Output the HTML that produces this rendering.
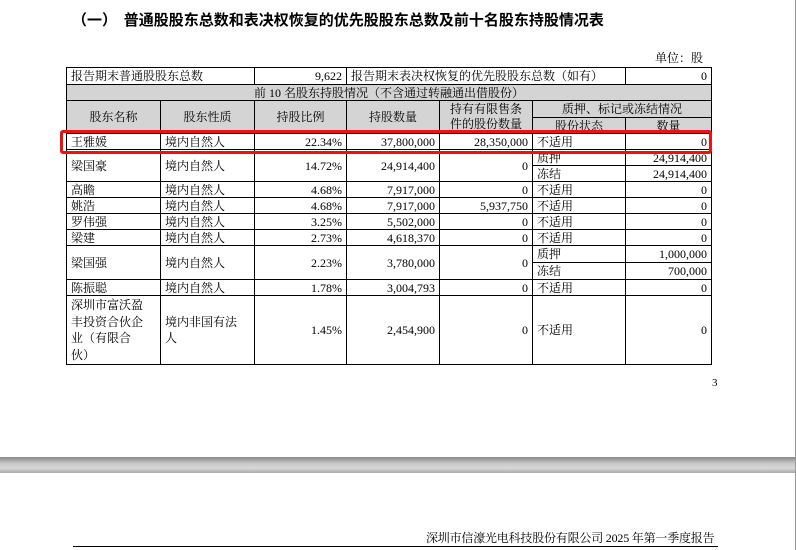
<!DOCTYPE html>
<html><head><meta charset="utf-8"><style>
html,body{margin:0;padding:0;width:796px;height:550px;overflow:hidden;background:#fff;position:relative;font-family:"Liberation Serif","Noto Serif CJK SC",serif;color:#000}
.t{position:absolute;white-space:nowrap}
table{position:absolute;left:66px;top:67px;border-collapse:collapse;table-layout:fixed;font-size:12px}
td{border:1px solid #000;padding:0 4px;line-height:14px;height:15px;overflow:hidden;white-space:nowrap}
.g{background:#d4d4d4}
.c{text-align:center}
.r{text-align:right}
</style></head><body>
<div class="t" style="left:72px;top:9px;font-size:15px;font-weight:bold;font-family:'Noto Sans CJK SC',sans-serif">（一）&nbsp;&nbsp;普通股股东总数和表决权恢复的优先股股东总数及前十名股东持股情况表</div>
<div class="t" style="left:655px;top:49px;font-size:12px">单位：股</div>
<table>
<colgroup><col style="width:94px"><col style="width:94px"><col style="width:92px"><col style="width:93px"><col style="width:93px"><col style="width:93px"><col style="width:86px"></colgroup>
<tr style="height:17px"><td colspan="2">报告期末普通股股东总数</td><td class="r">9,622</td><td colspan="3">报告期末表决权恢复的优先股股东总数（如有）</td><td class="r">0</td></tr>
<tr style="height:16px" class="g"><td colspan="7" class="c">前 10 名股东持股情况（不含通过转融通出借股份）</td></tr>
<tr class="g" style="height:17px"><td rowspan="2" class="c">股东名称</td><td rowspan="2" class="c">股东性质</td><td rowspan="2" class="c">持股比例</td><td rowspan="2" class="c">持股数量</td><td rowspan="2" class="c" style="line-height:15px">持有有限售条<br>件的股份数量</td><td colspan="2" class="c">质押、标记或冻结情况</td></tr>
<tr class="g" style="height:16px"><td class="c">股份状态</td><td class="c">数量</td></tr>
<tr style="height:16px"><td>王雅媛</td><td>境内自然人</td><td class="r">22.34%</td><td class="r">37,800,000</td><td class="r">28,350,000</td><td>不适用</td><td class="r">0</td></tr>
<tr style="height:16px"><td rowspan="2">梁国豪</td><td rowspan="2">境内自然人</td><td rowspan="2" class="r">14.72%</td><td rowspan="2" class="r">24,914,400</td><td rowspan="2" class="r">0</td><td>质押</td><td class="r">24,914,400</td></tr>
<tr style="height:16px"><td>冻结</td><td class="r">24,914,400</td></tr>
<tr style="height:16px"><td>高瞻</td><td>境内自然人</td><td class="r">4.68%</td><td class="r">7,917,000</td><td class="r">0</td><td>不适用</td><td class="r">0</td></tr>
<tr style="height:16px"><td>姚浩</td><td>境内自然人</td><td class="r">4.68%</td><td class="r">7,917,000</td><td class="r">5,937,750</td><td>不适用</td><td class="r">0</td></tr>
<tr style="height:16px"><td>罗伟强</td><td>境内自然人</td><td class="r">3.25%</td><td class="r">5,502,000</td><td class="r">0</td><td>不适用</td><td class="r">0</td></tr>
<tr style="height:16px"><td>梁建</td><td>境内自然人</td><td class="r">2.73%</td><td class="r">4,618,370</td><td class="r">0</td><td>不适用</td><td class="r">0</td></tr>
<tr style="height:17px"><td rowspan="2">梁国强</td><td rowspan="2">境内自然人</td><td rowspan="2" class="r">2.23%</td><td rowspan="2" class="r">3,780,000</td><td rowspan="2" class="r">0</td><td>质押</td><td class="r">1,000,000</td></tr>
<tr style="height:17px"><td>冻结</td><td class="r">700,000</td></tr>
<tr style="height:16px"><td>陈振聪</td><td>境内自然人</td><td class="r">1.78%</td><td class="r">3,004,793</td><td class="r">0</td><td>不适用</td><td class="r">0</td></tr>
<tr style="height:69px"><td style="line-height:16.5px">深圳市富沃盈<br>丰投资合伙企<br>业（有限合<br>伙）</td><td style="line-height:16px">境内非国有法<br>人</td><td class="r">1.45%</td><td class="r">2,454,900</td><td class="r">0</td><td>不适用</td><td class="r">0</td></tr>
</table>
<div style="position:absolute;left:60px;top:130px;width:646px;height:18px;border:3px solid #f01010;border-radius:3px"></div>
<div class="t" style="left:712px;top:377px;font-size:11px">3</div>
<div style="position:absolute;left:0;top:457px;width:796px;height:16px;background:linear-gradient(#888,#c8c8c8 40%,#d8d8d8 70%,#aaa)"></div>
<div style="position:absolute;right:0;top:0;width:1px;height:550px;background:#999"></div>
<div class="t" style="left:426px;top:529px;font-size:12px;letter-spacing:-0.2px">深圳市信濠光电科技股份有限公司 2025 年第一季度报告</div>
<div style="position:absolute;left:73px;top:546px;width:645px;height:1px;background:#000"></div>
</body></html>
